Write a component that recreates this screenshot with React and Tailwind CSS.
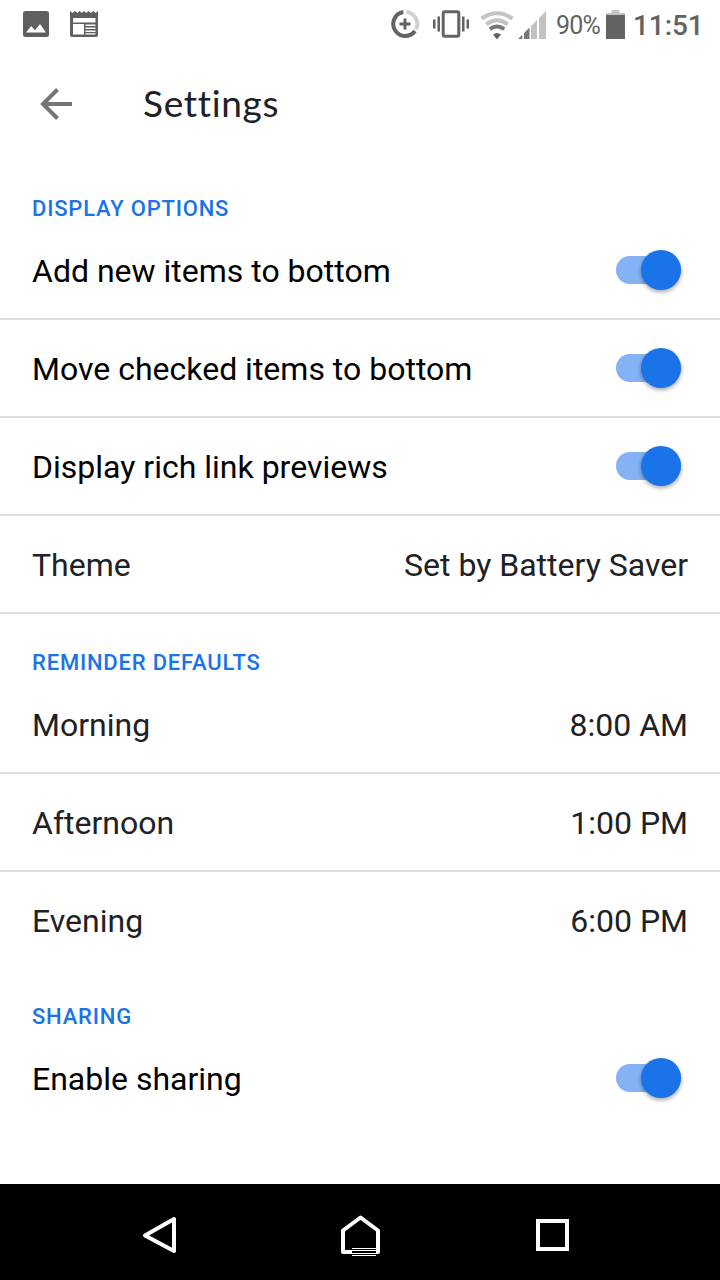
import React, { useState } from 'react';

const StatusIcons = () => (
    <div className="flex items-center h-12">
        {/* Image notification */}
        <svg width="26" height="26" viewBox="0 0 26 26" className="ml-[23px]">
            <rect width="26" height="26" rx="2.5" fill="#5f5f5f" />
            <path d="M3 21.5L8.2 15L12 19.2L17 13L23 21.5Z" fill="#fff" />
        </svg>
        {/* News notification */}
        <svg width="28" height="26" viewBox="0 0 28 26" className="ml-[21px]">
            <path d="M0 0L2.5 2L5 0L7.3 2L9.6 0L11.8 2L14 0L16.3 2L18.6 0L21 2L23.2 0L25.6 2L28 0V23.5Q28 26 25.5 26H2.5Q0 26 0 23.5Z" fill="#5f5f5f" />
            <path d="M3 7H25.500V11.500H3ZM3 13H14V23.500H3ZM15.500 13.500H25.500V15H15.500ZM15.500 16.500H25.500V18H15.500ZM15.500 19.500H25.500V21H15.500ZM15.500 22.300H25.500V23.600H15.500Z" fill="#fff" />
        </svg>

        {/* Data saver */}
        <svg width="30" height="30" viewBox="0 0 30 30" className="ml-[292px]" fill="none" strokeWidth="4">
            <path d="M16.500 3.100A12 12 0 0 1 26 20.300" stroke="#d0d0d0" />
            <path d="M13.400 3.100A12 12 0 1 0 25 22" stroke="#636363" />
            <path d="M15 9.500V20.500M9.500 15H20.500" stroke="#636363" strokeWidth="3" />
        </svg>
        {/* Vibrate */}
        <svg width="36" height="28" viewBox="0 0 36 28" className="ml-[13px]">
            <rect x="10.200" y="1.700" width="15.600" height="24.600" rx="1.500" fill="none" stroke="#636363" strokeWidth="3" />
            <path d="M0 9.500H2.500V18.500H0ZM4.500 6.500H7V21.500H4.500ZM29 6.500H31.500V21.500H29ZM33.500 9.500H36V18.500H33.500Z" fill="#636363" />
        </svg>
        {/* Wifi */}
        <svg width="34" height="29" viewBox="0 0 34 29" className="ml-[11px] mt-0.5" fill="none" strokeWidth="4">
            <path d="M1.500 7.500Q17 -3 32.500 7.500" stroke="#c4c4c4" />
            <path d="M6.300 13.300Q17 5.300 27.700 13.300" stroke="#c4c4c4" />
            <path d="M9.800 18.200Q17 12.800 24.200 18.200" stroke="#777" />
            <path d="M13 23.500Q17 20.300 21 23.500L17 28.500Z" fill="#636363" stroke="none" />
        </svg>
        {/* Signal */}
        <svg width="28" height="28" viewBox="0 0 28 28" className="ml-[4px] mt-[2px]">
            <path d="M0 28L4.300 23.700V28ZM6 22L11.500 16.500V28H6Z" fill="#777" />
            <path d="M13 15L19 9V28H13ZM21 7L28 0V28H21Z" fill="#c2c2c2" />
        </svg>
        <span className="ml-[10px] w-[50px] text-[25px] leading-none tracking-[-0.8px] text-[#636363] mt-[2px]">90%</span>
        {/* Battery */}
        <svg width="19" height="29" viewBox="0 0 19 29">
            <path d="M5.500 0H13.500V3H19V5H0V3H5.500Z" fill="#c4c4c4" />
            <path d="M0 5H19V29H0Z" fill="#636363" />
        </svg>
        <span className="ml-[8px] text-[28px] leading-none font-medium tracking-[-0.1px] text-[#636363] mt-[3px]">11:51</span>
    </div>
);

const SectionTitle = ({ children }) => (
    <h2 className="h-[62px] pt-[34px] px-8 text-[22px] leading-[30px] font-medium tracking-[0.8px] text-[#1a73e8]">
        {children}
    </h2>
);

const Row = ({ label, border = true, dark = false, children }) => (
    <div className={`flex items-center justify-between box-content h-24 pl-8 ${border ? 'border-b-2 border-[#dedede]' : ''}`}>
        <span className={`text-[32px] leading-10 mt-0.5 ${dark ? 'text-black' : 'text-[#202124]'}`}>{label}</span>
        {children}
    </div>
);

const ToggleRow = ({ label, border }) => {
    const [on, setOn] = useState(true);
    return (
        <Row label={label} border={border} dark>
            <button
                role="switch"
                aria-checked={on}
                aria-label={label}
                onClick={() => setOn(!on)}
                className={`flex items-center mr-[39px] w-[65px] h-7 rounded-full ${on ? 'justify-end bg-[#84b2f4]' : 'justify-start bg-[#bdbdbd]'}`}
            >
                <span className={`size-10 rounded-full shadow-[0_2px_4px_rgba(0,0,0,0.36)] ${on ? 'bg-[#1a73e8]' : 'bg-white'}`} />
            </button>
        </Row>
    );
};

const ValueRow = ({ label, value, border }) => (
    <Row label={label} border={border}>
        <span className="mr-8 mt-0.5 text-[32px] leading-10 text-[#202124]">{value}</span>
    </Row>
);

export default function App() {
    return (
        <div className="flex flex-col w-[720px] h-[1280px] overflow-hidden bg-white font-['Roboto',sans-serif]">
            <StatusIcons />

            <header className="flex items-center h-28 pl-10">
                <svg width="32" height="32" viewBox="0 0 32 32" fill="none" stroke="#757575" strokeWidth="4">
                    <path d="M32 16H4M17.500 1.500L3 16L17.500 30.500" />
                </svg>
                <h1 className="ml-[71px] -mt-0.5 text-[37px] leading-10 tracking-[0.7px] font-['Lato',sans-serif] text-[#202124]">Settings</h1>
            </header>

            <main className="flex-1">
                <SectionTitle>DISPLAY OPTIONS</SectionTitle>
                <ToggleRow label="Add new items to bottom" />
                <ToggleRow label="Move checked items to bottom" />
                <ToggleRow label="Display rich link previews" />
                <ValueRow label="Theme" value="Set by Battery Saver" />

                <SectionTitle>REMINDER DEFAULTS</SectionTitle>
                <ValueRow label="Morning" value="8:00 AM" />
                <ValueRow label="Afternoon" value="1:00 PM" />
                <ValueRow label="Evening" value="6:00 PM" border={false} />

                <SectionTitle>SHARING</SectionTitle>
                <ToggleRow label="Enable sharing" border={false} />
            </main>

            <nav className="flex items-center h-24 pt-1.5 pl-[142px] bg-black">
                <svg width="36" height="40" viewBox="0 0 36 40" fill="none" stroke="#fff" strokeWidth="4" strokeLinejoin="round">
                    <path d="M32 4V36L3 20.500Z" />
                </svg>
                <svg width="40" height="42" viewBox="0 0 40 42" className="ml-[162px]" fill="none" stroke="#fff" strokeWidth="4">
                    <path d="M12 38H3V16.500L20.500 3.500L38 16.500V38H36" strokeLinejoin="round" />
                    <path d="M12 35H36V42H12Z" fill="#000" stroke="none" />
                    <path d="M12 34.500H36M12 36.500H36M12 39.500H36M12 41.500H36" strokeWidth="1" />
                </svg>
                <svg width="33" height="32" viewBox="0 0 33 32" className="ml-[156px]" fill="none" stroke="#fff" strokeWidth="4">
                    <rect x="2" y="2" width="29" height="28" />
                </svg>
            </nav>
        </div>
    );
}
